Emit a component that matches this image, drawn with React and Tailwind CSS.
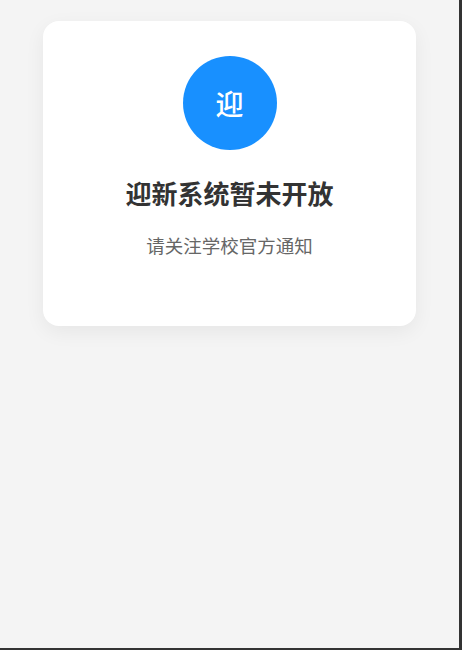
export default function App() {
  return (
    <div
      className="w-[462px] h-[650px] bg-[#f4f4f4] border-r-[3px] border-b-[2px] border-[#333] box-border"
      style={{ fontFamily: '"Noto Sans CJK SC", "Noto Sans", sans-serif' }}
    >
      <div className="pt-[21px] px-[43px]">
        <div className="bg-white rounded-[16px] shadow-[0_6px_20px_rgba(0,0,0,0.06)] h-[305px] flex flex-col items-center pt-[35px]">
          <div className="w-[94px] h-[94px] rounded-full bg-[#1890ff] flex items-center justify-center">
            <span className="text-white text-[28px] font-medium leading-none">迎</span>
          </div>
          <div className="mt-[25px] text-[26px] font-bold text-[#333] leading-[36px]">迎新系统暂未开放</div>
          <div className="mt-[21px] text-[18.5px] text-[#666] leading-[26px]">请关注学校官方通知</div>
        </div>
      </div>
    </div>
  );
}
